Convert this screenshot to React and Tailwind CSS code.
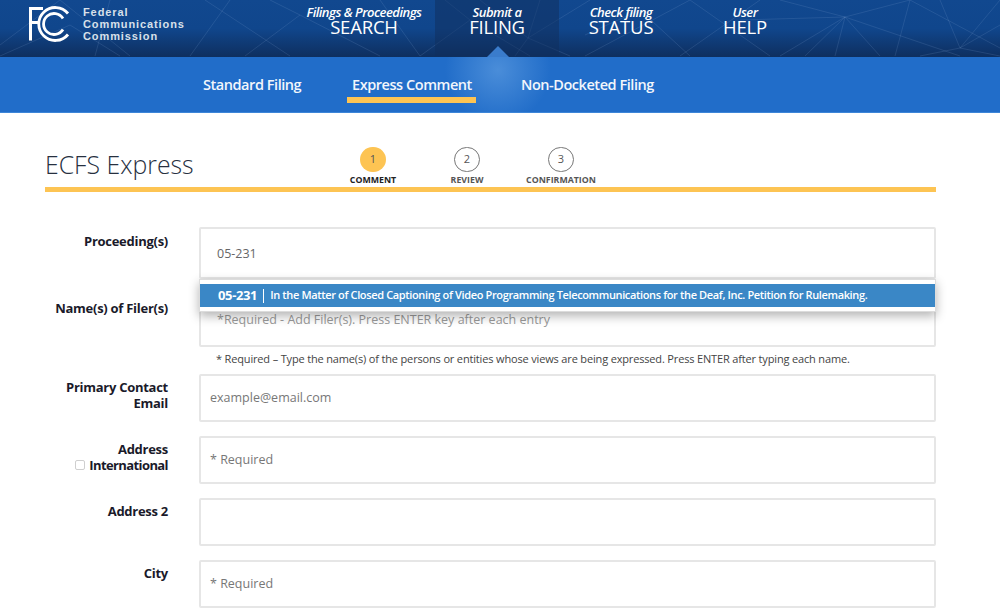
const lines = [
  [0, 45, 60, 0], [60, 0, 130, 56], [0, 56, 70, 25], [70, 25, 120, 56], [95, 56, 110, 0], [230, 0, 190, 56], [205, 0, 290, 56],
  [245, 56, 300, 15], [300, 15, 380, 56], [300, 15, 270, 0], [380, 0, 420, 56], [420, 56, 470, 20], [470, 20, 530, 56], [470, 20, 445, 0],
  [528, 38, 480, 0], [528, 38, 540, 0], [528, 38, 590, 0], [528, 38, 515, 56], [528, 38, 570, 56], [585, 56, 690, 0], [640, 10, 690, 56], [640, 10, 585, 35],
  [690, 0, 770, 56], [760, 0, 680, 56], [845, 17, 805, 56], [845, 17, 780, 56], [845, 17, 835, 56], [845, 17, 880, 56], [845, 17, 910, 0], [845, 17, 780, 0], [845, 17, 960, 56],
  [845, 17, 740, 20], [910, 0, 895, 56], [910, 0, 1000, 48], [960, 48, 1000, 0], [960, 48, 1000, 56], [960, 48, 940, 0], [960, 48, 920, 56], [960, 48, 1000, 25],
];

const navItems = [
  { top: 'Filings & Proceedings', main: 'SEARCH', cls: 'w-[124px]' },
  { top: 'Submit a', main: 'FILING', cls: 'w-[124px] ml-[9px] bg-[#0f2e5c]/50' },
  { top: 'Check filing', main: 'STATUS', cls: 'w-[124px]' },
  { top: 'User', main: 'HELP', cls: 'w-[124px]' },
];

const steps = [
  { n: 1, label: 'COMMENT', active: true },
  { n: 2, label: 'REVIEW' },
  { n: 3, label: 'CONFIRMATION' },
];

function FccLogo() {
  return (
    <svg width="41" height="36" viewBox="0 0 41 36" fill="none" stroke="white">
      <path d="M1.5 34.5V2.5H14M1.5 16.5H11" strokeWidth="3" />
      <path d="M39 7.5A16.5 16.5 0 1 0 39 28.5" strokeWidth="2.8" />
      <path d="M34 12.5A10.5 10.5 0 1 0 34 23.5" strokeWidth="2.8" />
    </svg>
  );
}

function Field({ label, sub, placeholder }) {
  return (
    <div className="flex">
      <div className="w-[123px] pt-[6px] text-right text-[13px] leading-[15.5px] font-bold tracking-[-0.27px] text-[#1a1a2a]">
        {label}
        {sub && (
          <div className="flex items-center justify-end gap-[4px] tracking-[-0.6px]">
            <span className="h-[10px] w-[10px] rounded-[2px] border border-[#cfcfcf] bg-white" />
            {sub}
          </div>
        )}
      </div>
      <div className="ml-[31px] h-[48px] w-[737px] rounded-[2px] border-2 border-[#e6e6e6] bg-white pl-[9px] pt-[13px] text-[12.5px] leading-[18px] text-[#777]">
        {placeholder}
      </div>
    </div>
  );
}

export default function App() {
  return (
    <div className="h-[611px] overflow-hidden bg-white font-['Open_Sans',sans-serif]">
      <div className="relative flex h-[57px] overflow-hidden bg-gradient-to-b from-[#11488f] via-[#10468c] to-[#0e2f5f]">
        <svg className="absolute inset-0" width="1000" height="57" stroke="#8fb0d8" strokeOpacity="0.16" strokeWidth="1">
          {lines.map((l, i) => (
            <line key={i} x1={l[0]} y1={l[1]} x2={l[2]} y2={l[3]} />
          ))}
        </svg>

        <div className="relative flex w-[302px] shrink-0 pl-[29px] pt-[6px]">
          <FccLogo />
          <div className="ml-[13px] pt-[1px] font-['Liberation_Sans',sans-serif] text-[11px] leading-[11.8px] font-bold tracking-[0.9px] text-[#d8e0ea]">
            Federal<br />Communications<br />Commission
          </div>
        </div>

        {navItems.map((item) => (
          <div key={item.main} className={`relative h-[56px] pt-[5px] text-center text-white ${item.cls}`}>
            <div className="text-[13px] leading-[14px] font-semibold tracking-[-0.5px] italic">{item.top}</div>
            <div className="mt-[1px] text-[18.5px] leading-[14px] font-medium tracking-[-0.2px]">{item.main}</div>
          </div>
        ))}

        <div className="absolute bottom-0 left-[487px] h-0 w-0 border-x-[11px] border-b-[11px] border-x-transparent border-b-[#3a7ccc]" />
      </div>

      <div className="relative h-[56px] overflow-hidden border-b border-[#3d86d8] bg-[#216dc9]">
        <div className="absolute left-[443px] top-[-42px] h-[110px] w-[110px] rounded-full bg-[radial-gradient(circle,#4a8dd9_0%,#216dc9_68%)]" />
        <div className="relative flex pl-[203px] pt-[18px] text-[14.5px] leading-[20px] font-semibold tracking-[-0.45px] text-[#f2f6fc]">
          <span className="w-[98px] whitespace-nowrap">Standard Filing</span>
          <span className="relative ml-[51px] w-[119px] whitespace-nowrap">
            Express Comment
            <span className="absolute left-[-5px] right-[-5px] top-[22px] h-[6px] bg-[#fdc453]" />
          </span>
          <span className="ml-[50px] whitespace-nowrap">Non-Docketed Filing</span>
        </div>
      </div>

      <div className="relative ml-[45px] w-[891px]">
        <div className="flex h-[79px] border-b-[5px] border-[#fdc453]">
          <h1 className="w-[281px] pt-[34px] text-[24.8px] leading-[34px] font-light text-[#27303f]">ECFS Express</h1>
          <div className="flex pt-[34px]">
            {steps.map((s) => (
              <div key={s.n} className="flex w-[94px] flex-col items-center">
                <div className={`flex h-[26px] w-[26px] items-center justify-center rounded-full text-[11px] text-[#555] ${s.active ? 'bg-[#fdc453]' : 'border border-[#777]'}`}>
                  {s.n}
                </div>
                <div className={`mt-[1px] text-[8.8px] leading-[14px] font-bold whitespace-nowrap ${s.active ? 'text-[#222]' : 'text-[#555]'}`}>{s.label}</div>
              </div>
            ))}
          </div>
        </div>

        <div className="flex pt-[35px]">
          <div className="w-[123px] pt-[7px] text-right text-[13px] leading-[15.5px] font-bold tracking-[-0.27px] text-[#1a1a2a]">Proceeding(s)</div>
          <div className="ml-[31px] h-[52px] w-[737px] rounded-[2px] border-2 border-[#e6e6e6] pl-[16px] pt-[16px] text-[12.5px] leading-[18px] text-[#666]">05-231</div>
        </div>

        <div className="mt-[16px] flex">
          <div className="w-[123px] pt-[6px] text-right text-[13px] leading-[15.5px] font-bold tracking-[-0.27px] whitespace-nowrap text-[#1a1a2a]">Name(s) of Filer(s)</div>
          <div className="ml-[31px] w-[737px]">
            <div className="h-[52px] rounded-[2px] border-2 border-[#e6e6e6] pl-[16px] pt-[14px] text-[12.5px] leading-[18px] text-[#999]">
              *Required - Add Filer(s). Press ENTER key after each entry
            </div>
            <div className="pl-[17px] pt-[4px] text-[11px] leading-[15px] tracking-[-0.16px] text-[#444]">
              * Required – Type the name(s) of the persons or entities whose views are being expressed. Press ENTER after typing each name.
            </div>
          </div>
        </div>

        <div className="absolute left-[154px] top-[166px] h-[33px] w-[737px] border border-[#dcdcdc] bg-white pt-[4px] shadow-[0_4px_10px_rgba(0,0,0,0.3)]">
          <div className="flex h-[23px] items-center bg-[#3a87c6] pl-[18px] text-[11px] font-semibold tracking-[-0.36px] text-white">
            <span className="text-[13px] font-bold">05-231</span>
            <span className="mx-[6px] h-[14px] w-px bg-white" />
            In the Matter of Closed Captioning of Video Programming Telecommunications for the Deaf, Inc. Petition for Rulemaking.
          </div>
        </div>

        <div className="mt-[8px] flex flex-col gap-[14px]">
          <Field label={<>Primary Contact<br />Email</>} placeholder="example@email.com" />
          <Field label="Address" sub="International" placeholder="* Required" />
          <Field label="Address 2" />
          <Field label="City" placeholder="* Required" />
        </div>
      </div>
    </div>
  );
}
